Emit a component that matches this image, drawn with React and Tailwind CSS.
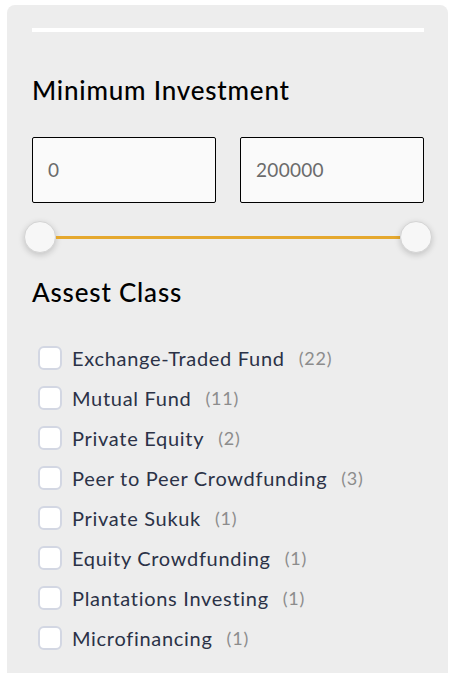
const classes = [
  { name: 'Exchange-Traded Fund', count: 22 },
  { name: 'Mutual Fund', count: 11 },
  { name: 'Private Equity', count: 2 },
  { name: 'Peer to Peer Crowdfunding', count: 3 },
  { name: 'Private Sukuk', count: 1 },
  { name: 'Equity Crowdfunding', count: 1 },
  { name: 'Plantations Investing', count: 1 },
  { name: 'Microfinancing', count: 1 },
]

const Thumb = () => (
  <div className="h-[32px] w-[32px] shrink-0 rounded-full border border-[#d4d4d4] bg-[#f7f7f7] shadow-[0_2px_6px_rgba(0,0,0,0.18)]" />
)

export default function App() {
  return (
    <div className="min-h-[673px] bg-white pt-[5px] pl-[7px] font-['Lato',sans-serif]">
      <div className="min-h-[668px] w-[441px] rounded-t-[8px] bg-[#ededed] pt-[23px] pr-[24px] pl-[25px]">
        <div className="h-[4px] w-full bg-white" />
        <h2 className="mt-[42px] text-[26px] leading-[32px] font-medium tracking-[0.8px] text-black">Minimum Investment</h2>
        <div className="mt-[31px] flex gap-[24px]">
          <div className="flex h-[66px] flex-1 items-center rounded-[2px] border border-black bg-[#fafafa] px-[15px] text-[19px] tracking-[0.3px] text-[#6b6b6b]">0</div>
          <div className="flex h-[66px] flex-1 items-center rounded-[2px] border border-black bg-[#fafafa] px-[15px] text-[19px] tracking-[0.3px] text-[#6b6b6b]">200000</div>
        </div>
        <div className="-mx-[8px] mt-[18px] flex items-center">
          <Thumb />
          <div className="h-[3px] flex-1 bg-[#e5a82e]" />
          <Thumb />
        </div>
        <h2 className="mt-[23px] text-[26px] leading-[32px] font-medium tracking-[0.8px] text-black">Assest Class</h2>
        <ul className="mt-[38px] flex flex-col gap-[16px] pl-[6px]">
          {classes.map((c) => (
            <li key={c.name} className="flex h-[24px] items-center">
              <span className="h-[24px] w-[24px] shrink-0 rounded-[6px] border-2 border-[#d3d7e3] bg-white" />
              <span className="ml-[10px] text-[20px] tracking-[0.7px] text-[#2b3247]">{c.name}</span>
              <span className="ml-[14px] text-[18px] tracking-[0.8px] text-[#8c8c8c]">({c.count})</span>
            </li>
          ))}
        </ul>
      </div>
    </div>
  )
}
